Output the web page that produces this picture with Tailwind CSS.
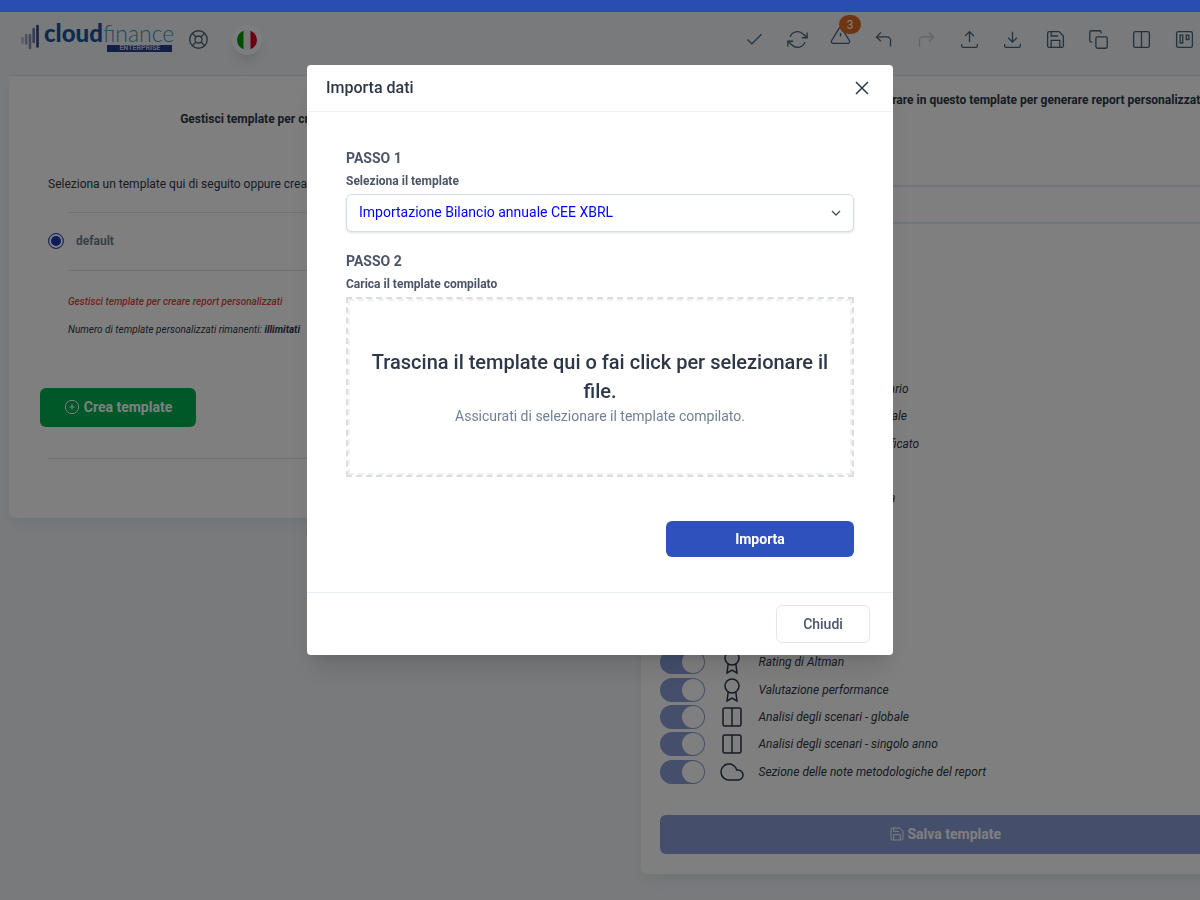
<!DOCTYPE html>
<html lang="it">
<head>
<meta charset="utf-8">
<meta name="viewport" content="width=device-width, initial-scale=1">
<title>Cloudfinance - Importa dati</title>
<script src="https://cdn.jsdelivr.net/npm/@tailwindcss/browser@4"></script>
</head>
<body class="min-h-screen overflow-hidden bg-[#f1f5f9] font-[Roboto,sans-serif] text-xs text-[#2d3748]">
<svg class="hidden" aria-hidden="true">
  <defs>
    <symbol id="check" viewBox="0 0 24 24"><path d="M20 6 9 17l-5-5"/></symbol>
    <symbol id="refresh" viewBox="0 0 24 24"><path d="M23 4v6h-6M1 20v-6h6"/><path d="M3.51 9a9 9 0 0 1 14.85-3.36L23 10M1 14l4.64 4.36A9 9 0 0 0 20.49 15"/></symbol>
    <symbol id="alert" viewBox="0 0 24 24"><path d="M10.29 3.86 1.82 18a2 2 0 0 0 1.71 3h16.94a2 2 0 0 0 1.71-3L13.71 3.86a2 2 0 0 0-3.42 0zM12 9v4M12 17h.01"/></symbol>
    <symbol id="undo" viewBox="0 0 24 24"><path d="M9 14 4 9l5-5"/><path d="M20 20v-7a4 4 0 0 0-4-4H4"/></symbol>
    <symbol id="redo" viewBox="0 0 24 24"><path d="m15 14 5-5-5-5"/><path d="M4 20v-7a4 4 0 0 1 4-4h12"/></symbol>
    <symbol id="upload" viewBox="0 0 24 24"><path d="M3 17v2a2 2 0 0 0 2 2h14a2 2 0 0 0 2-2v-2M7 8l5-5 5 5M12 3v12"/></symbol>
    <symbol id="download" viewBox="0 0 24 24"><path d="M3 17v2a2 2 0 0 0 2 2h14a2 2 0 0 0 2-2v-2M7 10l5 5 5-5M12 15V3"/></symbol>
    <symbol id="save" viewBox="0 0 24 24"><path d="M19 21H5a2 2 0 0 1-2-2V5a2 2 0 0 1 2-2h11l5 5v11a2 2 0 0 1-2 2z"/><path d="M17 21v-8H7v8M7 3v5h8"/></symbol>
    <symbol id="copy" viewBox="0 0 24 24"><rect x="9" y="9" width="13" height="13" rx="2"/><path d="M5 15H4a2 2 0 0 1-2-2V4a2 2 0 0 1 2-2h9a2 2 0 0 1 2 2v1"/></symbol>
    <symbol id="columns" viewBox="0 0 24 24"><rect x="3" y="3" width="18" height="18" rx="2"/><path d="M12 3v18"/></symbol>
    <symbol id="board" viewBox="0 0 24 24"><rect x="3" y="3" width="18" height="18" rx="2"/><path d="M7 7h3v9H7zM14 7h3v5h-3z"/></symbol>
    <symbol id="buoy" viewBox="0 0 24 24"><circle cx="12" cy="12" r="10"/><circle cx="12" cy="12" r="4"/><path d="m4.93 4.93 4.24 4.24M14.83 14.83l4.24 4.24M14.83 9.17l4.24-4.24M4.93 19.07l4.24-4.24"/></symbol>
    <symbol id="award" viewBox="0 0 24 24"><circle cx="12" cy="8" r="7"/><path d="M8.21 13.89 7 23l5-3 5 3-1.21-9.12"/></symbol>
    <symbol id="cloud" viewBox="0 0 24 24"><path d="M18 10h-1.26A8 8 0 1 0 9 20h9a5 5 0 0 0 0-10z"/></symbol>
    <symbol id="plus" viewBox="0 0 24 24"><circle cx="12" cy="12" r="10"/><path d="M12 8v8M8 12h8"/></symbol>
    <symbol id="close" viewBox="0 0 24 24"><path d="M18 6 6 18M6 6l12 12"/></symbol>
    <symbol id="chevron" viewBox="0 0 24 24"><path d="m6 9 6 6 6-6"/></symbol>
  </defs>
</svg>

<div class="h-3 bg-[#2a4db2]"></div>

<div class="pl-[9px]">
  <header class="flex h-16 items-center justify-between border-b border-[#dbe6f1] pr-[5px] pb-2 pl-3">
    <div class="flex items-center">
      <a href="#" aria-label="cloudfinance enterprise" class="flex w-[154px] items-start gap-[5px] pb-1">
        <svg class="h-[26px] w-[18px] shrink-0" viewBox="0 0 18 26">
          <g stroke-width="2.6" stroke-linecap="round">
            <path stroke="#b9c0d4" d="M1.500 14v5"/><path stroke="#99a2c0" d="M5.200 11v8.500"/><path stroke="#8590b6" d="M9 11v13"/><path stroke="#6a78aa" d="M12.700 5v13"/><path stroke="#33457f" d="M16.500 2v20.500"/>
          </g>
        </svg>
        <span class="flex flex-col items-end">
          <span class="flex h-[21px] items-start font-[Lato,sans-serif] leading-[18px]"><span class="text-[24px] leading-[18px] font-black text-[#12579c]">cloud</span><span class="text-[23px] leading-[18px] font-light text-[#3f93b8]">finance</span></span>
          <span class="mr-[2px] flex h-[7px] w-[65px] items-center justify-center bg-[#26408a] text-[7px] leading-[7px] font-bold text-[#cbd3ea]">ENTERPRISE</span>
        </span>
      </a>
      <button aria-label="Assistenza" class="ml-[13px] text-[#48647c]"><svg class="size-[21px] fill-none stroke-current stroke-[1.5]"><use href="#buoy"/></svg></button>
      <button aria-label="Italiano" class="ml-[23px] flex size-[30px] items-center justify-center rounded-full bg-white/60 shadow-lg">
        <svg class="size-5" viewBox="0 0 20 20"><clipPath id="disc"><circle cx="10" cy="10" r="10"/></clipPath><g clip-path="url(#disc)"><path fill="#f0f0f0" d="M0 0h20v20H0z"/><path fill="#009a00" d="M0 0h6.500v20H0z"/><path fill="#d80027" d="M13.500 0H20v20h-6.500z"/></g></svg>
      </button>
    </div>
    <nav class="flex items-center gap-[22px] text-[#48647c]">
      <button aria-label="Conferma"><svg class="size-[21px] fill-none stroke-current stroke-[1.5]"><use href="#check"/></svg></button>
      <button aria-label="Aggiorna"><svg class="size-[21px] fill-none stroke-current stroke-[1.5]"><use href="#refresh"/></svg></button>
      <button aria-label="Avvisi" class="relative pb-2"><svg class="size-[21px] fill-none stroke-current stroke-[1.5]"><use href="#alert"/></svg><span class="absolute -top-[10px] left-[9px] flex h-[19px] w-[22px] items-center justify-center rounded-full bg-[#dd6b20] text-xs text-white">3</span></button>
      <button aria-label="Annulla"><svg class="size-[21px] fill-none stroke-current stroke-[1.5]"><use href="#undo"/></svg></button>
      <button aria-label="Ripeti" disabled class="opacity-30"><svg class="size-[21px] fill-none stroke-current stroke-[1.5]"><use href="#redo"/></svg></button>
      <button aria-label="Carica"><svg class="size-[21px] fill-none stroke-current stroke-[1.5]"><use href="#upload"/></svg></button>
      <button aria-label="Scarica"><svg class="size-[21px] fill-none stroke-current stroke-[1.5]"><use href="#download"/></svg></button>
      <button aria-label="Salva"><svg class="size-[21px] fill-none stroke-current stroke-[1.5]"><use href="#save"/></svg></button>
      <button aria-label="Copia"><svg class="size-[21px] fill-none stroke-current stroke-[1.5]"><use href="#copy"/></svg></button>
      <button aria-label="Colonne"><svg class="size-[21px] fill-none stroke-current stroke-[1.5]"><use href="#columns"/></svg></button>
      <button aria-label="Bacheca"><svg class="size-[21px] fill-none stroke-current stroke-[1.5]"><use href="#board"/></svg></button>
    </nav>
  </header>

  <main class="-mr-[50px] grid grid-cols-2 items-start gap-[22px]">
    <section class="rounded-b-md bg-white px-[31px] pt-[34px] pb-[59px] shadow-lg shadow-slate-300/30">
      <h2 class="text-center leading-[18px] font-bold">Gestisci template per creare report personalizzati</h2>
      <div class="pl-2">
        <p class="mt-[47px] leading-[18px]">Seleziona un template qui di seguito oppure creane uno nuovo</p>
        <div class="mt-[19px] ml-5 border-t border-[#dfe4ee]"></div>
        <label class="flex h-[57px] items-center gap-3 pb-[2px] font-bold text-[#718096]"><input type="radio" name="template" checked class="size-4 appearance-none rounded-full border border-[#2c4fc4] bg-[#1c39b4] shadow-[inset_0_0_0_2px_#fff]">default</label>
        <div class="ml-5 border-t border-[#dfe4ee] pt-[22px] text-[10px] leading-[18px] italic">
          <p class="font-medium text-[#e53e3e]">Gestisci template per creare report personalizzati</p>
          <p class="mt-[10px]">Numero di template personalizzati rimanenti: <b>illimitati</b></p>
        </div>
      </div>
      <button class="mt-[49px] flex h-[39px] w-[156px] items-center justify-center gap-1 rounded-md bg-[#00b050] pb-[2px] text-sm font-bold text-white"><svg class="size-4 fill-none stroke-current stroke-[1.5]"><use href="#plus"/></svg>Crea template</button>
      <div class="mt-[31px] ml-2 border-t border-[#dfe4ee]"></div>
    </section>

    <section class="rounded-b-md bg-white px-[19px] pt-[15px] pb-5 shadow-lg shadow-slate-300/30">
      <h2 class="text-center leading-[18px] font-bold whitespace-nowrap">Seleziona le sezioni e i report da mostrare in questo template per generare report personalizzati</h2>
      <input aria-label="Nome del template" class="mt-[76px] block h-[39px] w-full rounded-md border-2 border-[#e2e8f0] px-3">
      <ul class="mt-[153px] flex h-[407px] flex-col justify-between text-xs italic">
        <li><label class="flex h-6 items-center"><input type="checkbox" checked class="mr-[15px] h-6 w-[45px] appearance-none rounded-full bg-[#8a9ed6] p-px before:ml-auto before:block before:size-[22px] before:rounded-full before:bg-white"><svg class="mr-[15px] size-6 fill-none stroke-current stroke-[1.5]"><use href="#columns"/></svg>Analisi rendiconto finanziario</label></li>
        <li><label class="flex h-6 items-center"><input type="checkbox" checked class="mr-[15px] h-6 w-[45px] appearance-none rounded-full bg-[#8a9ed6] p-px before:ml-auto before:block before:size-[22px] before:rounded-full before:bg-white"><svg class="mr-[15px] size-6 fill-none stroke-current stroke-[1.5]"><use href="#columns"/></svg>Conto economico funzionale</label></li>
        <li><label class="flex h-6 items-center"><input type="checkbox" checked class="mr-[15px] h-6 w-[45px] appearance-none rounded-full bg-[#8a9ed6] p-px before:ml-auto before:block before:size-[22px] before:rounded-full before:bg-white"><svg class="mr-[15px] size-6 fill-none stroke-current stroke-[1.5]"><use href="#columns"/></svg>Conto economico riclassificato</label></li>
        <li><label class="flex h-6 items-center"><input type="checkbox" checked class="mr-[15px] h-6 w-[45px] appearance-none rounded-full bg-[#8a9ed6] p-px before:ml-auto before:block before:size-[22px] before:rounded-full before:bg-white"><svg class="mr-[15px] size-6 fill-none stroke-current stroke-[1.5]"><use href="#columns"/></svg>Indici di bilancio</label></li>
        <li><label class="flex h-6 items-center"><input type="checkbox" checked class="mr-[15px] h-6 w-[45px] appearance-none rounded-full bg-[#8a9ed6] p-px before:ml-auto before:block before:size-[22px] before:rounded-full before:bg-white"><svg class="mr-[15px] size-6 fill-none stroke-current stroke-[1.5]"><use href="#columns"/></svg>Posizione finanziaria netta</label></li>
        <li><label class="flex h-6 items-center"><input type="checkbox" checked class="mr-[15px] h-6 w-[45px] appearance-none rounded-full bg-[#8a9ed6] p-px before:ml-auto before:block before:size-[22px] before:rounded-full before:bg-white"><svg class="mr-[15px] size-6 fill-none stroke-current stroke-[1.5]"><use href="#columns"/></svg>Analisi margini</label></li>
        <li><label class="flex h-6 items-center"><input type="checkbox" checked class="mr-[15px] h-6 w-[45px] appearance-none rounded-full bg-[#8a9ed6] p-px before:ml-auto before:block before:size-[22px] before:rounded-full before:bg-white"><svg class="mr-[15px] size-6 fill-none stroke-current stroke-[1.5]"><use href="#columns"/></svg>Break even</label></li>
        <li><label class="flex h-6 items-center"><input type="checkbox" checked class="mr-[15px] h-6 w-[45px] appearance-none rounded-full bg-[#8a9ed6] p-px before:ml-auto before:block before:size-[22px] before:rounded-full before:bg-white"><svg class="mr-[15px] size-6 fill-none stroke-current stroke-[1.5]"><use href="#award"/></svg>Indici di allerta</label></li>
        <li><label class="flex h-6 items-center"><input type="checkbox" checked class="mr-[15px] h-6 w-[45px] appearance-none rounded-full bg-[#8a9ed6] p-px before:ml-auto before:block before:size-[22px] before:rounded-full before:bg-white"><svg class="mr-[15px] size-6 fill-none stroke-current stroke-[1.5]"><use href="#award"/></svg>Rating MCC</label></li>
        <li><label class="flex h-6 items-center"><input type="checkbox" checked class="mr-[15px] h-6 w-[45px] appearance-none rounded-full bg-[#8a9ed6] p-px before:ml-auto before:block before:size-[22px] before:rounded-full before:bg-white"><svg class="mr-[15px] size-6 fill-none stroke-current stroke-[1.5]"><use href="#award"/></svg>Rating</label></li>
        <li><label class="flex h-6 items-center"><input type="checkbox" checked class="mr-[15px] h-6 w-[45px] appearance-none rounded-full bg-[#8a9ed6] p-px before:ml-auto before:block before:size-[22px] before:rounded-full before:bg-white"><svg class="mr-[15px] size-6 fill-none stroke-current stroke-[1.5]"><use href="#award"/></svg>Rating di Altman</label></li>
        <li><label class="flex h-6 items-center"><input type="checkbox" checked class="mr-[15px] h-6 w-[45px] appearance-none rounded-full bg-[#8a9ed6] p-px before:ml-auto before:block before:size-[22px] before:rounded-full before:bg-white"><svg class="mr-[15px] size-6 fill-none stroke-current stroke-[1.5]"><use href="#award"/></svg>Valutazione performance</label></li>
        <li><label class="flex h-6 items-center"><input type="checkbox" checked class="mr-[15px] h-6 w-[45px] appearance-none rounded-full bg-[#8a9ed6] p-px before:ml-auto before:block before:size-[22px] before:rounded-full before:bg-white"><svg class="mr-[15px] size-6 fill-none stroke-current stroke-[1.5]"><use href="#columns"/></svg>Analisi degli scenari - globale</label></li>
        <li><label class="flex h-6 items-center"><input type="checkbox" checked class="mr-[15px] h-6 w-[45px] appearance-none rounded-full bg-[#8a9ed6] p-px before:ml-auto before:block before:size-[22px] before:rounded-full before:bg-white"><svg class="mr-[15px] size-6 fill-none stroke-current stroke-[1.5]"><use href="#columns"/></svg>Analisi degli scenari - singolo anno</label></li>
        <li><label class="flex h-6 items-center"><input type="checkbox" checked class="mr-[15px] h-6 w-[45px] appearance-none rounded-full bg-[#8a9ed6] p-px before:ml-auto before:block before:size-[22px] before:rounded-full before:bg-white"><svg class="mr-[15px] size-6 fill-none stroke-current stroke-[1.5]"><use href="#cloud"/></svg>Sezione delle note metodologiche del report</label></li>
      </ul>
      <button class="mt-[31px] flex h-[39px] w-full items-center justify-center gap-[2px] rounded-md bg-[#8a9ed6] pb-[2px] text-sm font-bold text-white"><svg class="size-4 fill-none stroke-current stroke-[1.5]"><use href="#save"/></svg>Salva template</button>
    </section>
  </main>
</div>

<div class="fixed inset-x-0 top-3 bottom-0 flex items-start justify-center bg-black/50 pt-[53px]">
  <div role="dialog" aria-labelledby="dialog-title" class="w-full max-w-[586px] rounded bg-white text-[#4a5568] shadow-xl">
    <div class="flex h-[47px] items-center justify-between border-b border-[#edf2f7] pr-[19px] pl-[19px] text-[#2d3748]">
      <h1 id="dialog-title" class="text-base font-medium">Importa dati</h1>
      <button aria-label="Chiudi finestra"><svg class="size-6 fill-none stroke-current stroke-[1.5]"><use href="#close"/></svg></button>
    </div>
    <div class="px-[39px] pt-9 pb-[35px]">
      <p class="text-sm leading-5 font-bold">PASSO 1</p>
      <label for="tpl" class="mt-1 block text-xs leading-[18px] font-bold">Seleziona il template</label>
      <div class="mt-1 grid items-center">
        <select id="tpl" class="col-start-1 row-start-1 h-[38px] w-full appearance-none rounded-md border border-[#d5dde8] bg-white px-3 pb-[2px] text-sm text-[#0000ff] shadow-sm"><option>Importazione Bilancio annuale CEE XBRL</option></select>
        <svg class="pointer-events-none col-start-1 row-start-1 mr-[10px] size-4 justify-self-end fill-none stroke-current stroke-2"><use href="#chevron"/></svg>
      </div>
      <p class="mt-[19px] text-sm leading-5 font-bold">PASSO 2</p>
      <p class="mt-1 text-xs leading-[18px] font-bold">Carica il template compilato</p>
      <button class="mt-1 block w-full border-2 border-dashed border-[#dddddd]">
        <span class="flex h-44 flex-col items-center justify-center border-2 border-dashed border-[#edf2f7] px-5">
          <span class="text-xl leading-[29px] font-medium text-[#2d3748]">Trascina il template qui o fai click per selezionare il file.</span>
          <span class="text-sm leading-5 text-[#718096]">Assicurati di selezionare il template compilato.</span>
        </span>
      </button>
      <button class="mt-11 ml-auto block h-9 w-[188px] rounded-md bg-[#2f51bd] text-sm font-bold text-white">Importa</button>
    </div>
    <div class="flex justify-end border-t border-[#e9eff6] px-[23px] py-3">
      <button class="h-[38px] w-[94px] rounded-md border border-[#e2e8f0] text-sm font-medium">Chiudi</button>
    </div>
  </div>
</div>
</body>
</html>
